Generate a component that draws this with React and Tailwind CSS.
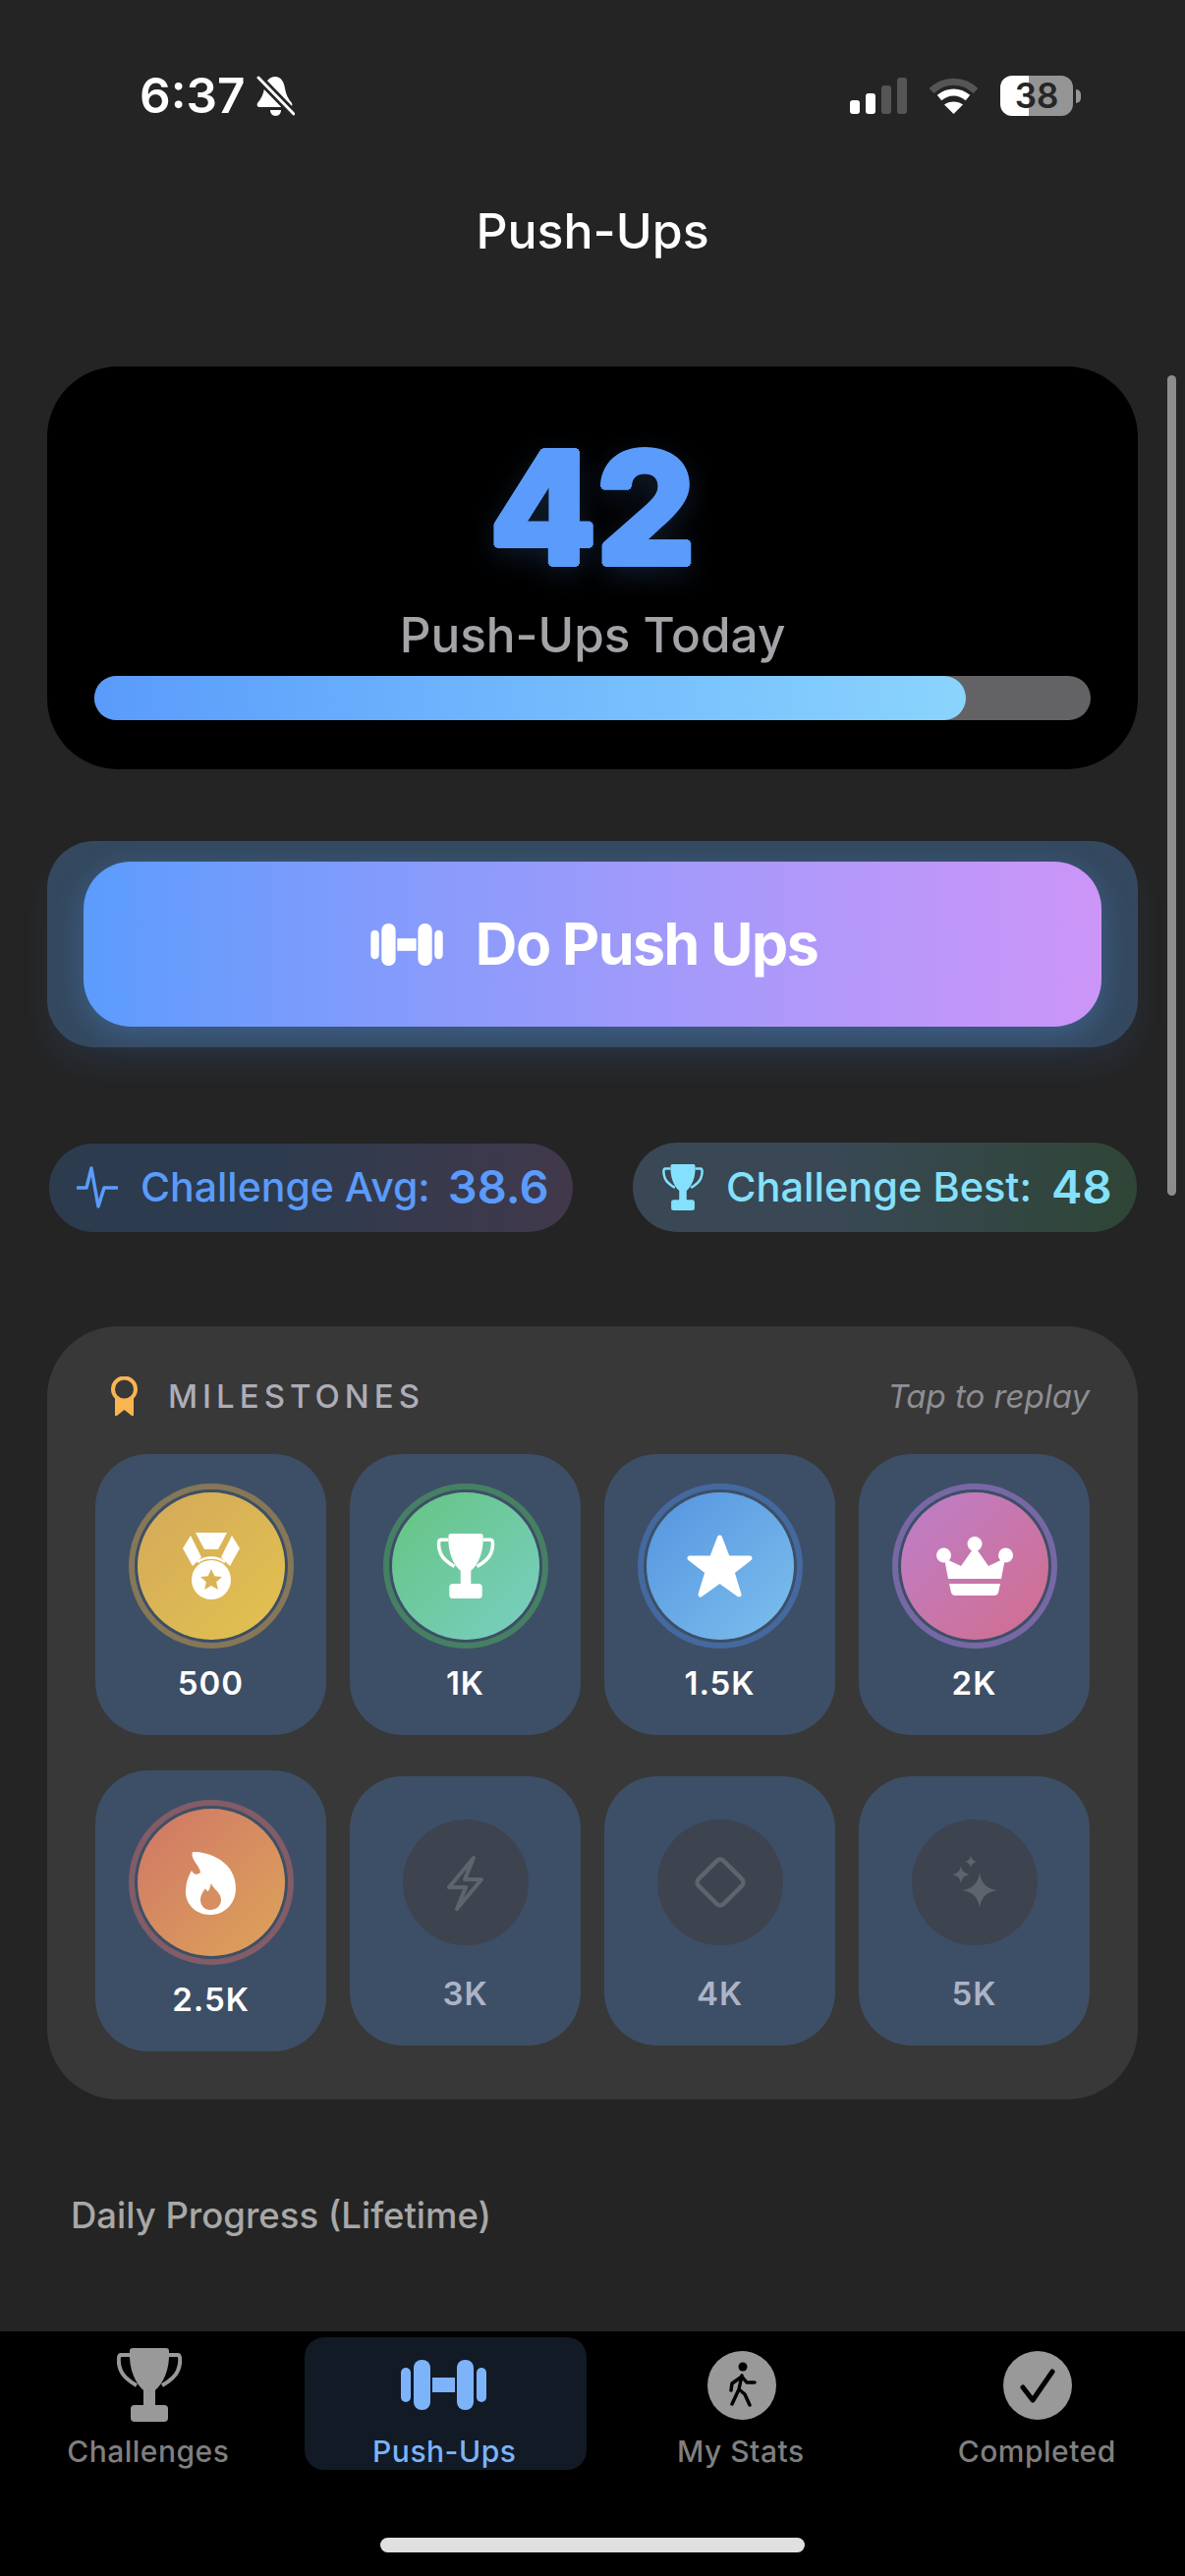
import React from "react";

const sans = "font-['Inter','Noto_Sans',sans-serif]";

const BellSlash = () => (
  <svg width="39" height="41" viewBox="0 0 39 41" fill="none">
    <path d="M19 1c-6 0-10 5-11 12-1 6-3 10-7 15-1 2 0 4 2 4h31c2 0 3-2 2-4-4-5-6-9-7-15-1-7-4-12-10-12Z" fill="#fff" />
    <path d="M14 35h11c0 3-2 6-5.500 6S14 38 14 35Z" fill="#fff" />
    <path d="M1 1 L40 41" stroke="#252525" strokeWidth="8.500" />
    <path d="M2 2 L38 39" stroke="#fff" strokeWidth="3" strokeLinecap="round" />
  </svg>
);

const Signal = () => (
  <svg width="58" height="37" viewBox="0 0 58 37">
    <rect x="0" y="23" width="10" height="14" rx="3" fill="#fff" />
    <rect x="16" y="16" width="10" height="21" rx="3" fill="#fff" />
    <rect x="32" y="8" width="10" height="29" rx="3" fill="#555" />
    <rect x="48" y="0" width="10" height="37" rx="3" fill="#555" />
  </svg>
);

const Wifi = () => (
  <svg width="51" height="37" viewBox="0 0 51 37" fill="none">
    <path d="M3 13.500C16 1 35 1 48 13.500" stroke="#555" strokeWidth="7" />
    <path d="M11 20.500C20 13 31 13 40 20.500" stroke="#fff" strokeWidth="7" />
    <path d="M25.500 37 L16 27.500C21 23.500 30 23.500 35 27.500Z" fill="#fff" />
  </svg>
);

const Dumbbell = ({ className }) => (
  <svg className={className} viewBox="0 0 87 51" fill="currentColor">
    <rect x="0" y="8" width="10" height="35" rx="5" />
    <rect x="13" y="0" width="17" height="51" rx="8" />
    <rect x="32" y="18" width="23" height="15" />
    <rect x="57" y="0" width="17" height="51" rx="8" />
    <rect x="77" y="8" width="10" height="35" rx="5" />
  </svg>
);

const Trophy = ({ className }) => (
  <svg className={className} viewBox="0 0 66 75" fill="currentColor">
    <path d="M13 3Q13 0 16 0H50Q53 0 53 3C54 22 47 36 39 43V60H27V43C19 36 12 22 13 3Z" />
    <rect x="14" y="58" width="38" height="17" rx="4" />
    <path d="M13 7H4C1 7 1 16 4 23C7 30 13 34 20 38" fill="none" stroke="currentColor" strokeWidth="4" />
    <path d="M53 7H62C65 7 65 16 62 23C59 30 53 34 46 38" fill="none" stroke="currentColor" strokeWidth="4" />
  </svg>
);

const Medal = () => (
  <svg width="58" height="68" viewBox="0 0 58 68" fill="#fff">
    <path d="M13 0H45L36 17H22Z" />
    <path d="M8 3L19 25 10 34 0 16Z" />
    <path d="M50 3L39 25 48 34 58 16Z" />
    <path d="M15 30C23 24 35 24 43 30" fill="none" stroke="#fff" strokeWidth="2.500" />
    <circle cx="29" cy="48" r="20" />
    <path d="M29 37l3.300 7.200 7.700.8-5.800 5.200 1.700 7.800-6.900-4-6.900 4 1.700-7.800-5.800-5.200 7.700-.8Z" fill="#dcb354" />
  </svg>
);

const Star = () => (
  <svg width="67" height="64" viewBox="0 0 67 64" fill="#fff" stroke="#fff" strokeWidth="5" strokeLinejoin="round">
    <path d="M33.500 3L41.500 24H64L46 38 53 61 33.500 47 14 61 21 38 3 24H25.500Z" />
  </svg>
);

const Crown = () => (
  <svg width="78" height="60" viewBox="0 0 78 60" fill="#fff">
    <circle cx="39" cy="7.500" r="7.500" />
    <circle cx="7.500" cy="19" r="7.500" />
    <circle cx="70.500" cy="19" r="7.500" />
    <path d="M8 22L25 30 39 10 53 30 70 22 66 43H12Z" />
    <path d="M13 48H65L63 57Q62 60 59 60H19Q16 60 15 57Z" />
  </svg>
);

const Flame = () => (
  <svg width="51" height="65" viewBox="0 0 51 65">
    <path d="M7 1C22 0 51 10 51 38 51 55 38 65 25 65 10 65 0 54 0 42 0 33 2 27 6 20 8 24 11 25 15 22 14 14 4 8 7 1Z" fill="#fff" />
    <path d="M26 33C28 39 36 42 36 50 36 56 31 60 25 60 19 60 15 55 15 50 15 45 18 41 20 38 21 41 23 42 24 39Z" fill="#d68f60" />
  </svg>
);

const Bolt = () => (
  <svg width="37" height="57" viewBox="0 0 37 57" fill="none" stroke="#5f636d" strokeWidth="4" strokeLinejoin="round" strokeLinecap="round">
    <path d="M27 3L2 33H19L10 55 35 25H18Z" />
  </svg>
);

const Diamond = () => (
  <svg width="58" height="58" viewBox="0 0 58 58" fill="none" stroke="#5f636d" strokeWidth="4.500">
    <rect x="11" y="11" width="36" height="36" rx="5" transform="rotate(45 29 29)" />
  </svg>
);

const Sparkles = () => (
  <svg width="46" height="55" viewBox="0 0 46 55" fill="#5f636d">
    <path d="M28 17Q30 33 46 35 30 37 28 53 26 37 10 35 26 33 28 17Z" />
    <path d="M9 10Q10 18 18 19 10 20 9 28 8 20 0 19 8 18 9 10Z" />
    <path d="M19 0Q20 5 25 6 20 7 19 12 18 7 13 6 18 5 19 0Z" />
  </svg>
);

const Pulse = () => (
  <svg width="42" height="43" viewBox="0 0 42 43" fill="none" stroke="#5a9bfb" strokeWidth="3.500" strokeLinejoin="round" strokeLinecap="round">
    <path d="M1 22H10L15 2 22 41 28 22H41" />
  </svg>
);

const Ribbon = () => (
  <svg width="29" height="41" viewBox="0 0 29 41">
    <path d="M5 22V39Q5 41 7 40L14.500 34 22 40Q24 41 24 39V22Z" fill="#f8b552" />
    <circle cx="14.500" cy="13" r="11.500" fill="#383838" stroke="#f8b552" strokeWidth="4" />
  </svg>
);

const WalkCircle = () => (
  <svg width="70" height="70" viewBox="0 0 70 70">
    <circle cx="35" cy="35" r="35" fill="#999" />
    <circle cx="36" cy="16" r="4.500" fill="#000" />
    <path d="M35 25L32 39 25 54M32 39L38 44 43 55M35 26L25 33 24 40M35 26L40 32H48" fill="none" stroke="#000" strokeWidth="3.500" strokeLinecap="round" strokeLinejoin="round" />
  </svg>
);

const CheckCircle = () => (
  <svg width="70" height="70" viewBox="0 0 70 70">
    <circle cx="35" cy="35" r="35" fill="#999" />
    <path d="M20 37L30 50 50 21" fill="none" stroke="#000" strokeWidth="5" strokeLinejoin="round" strokeLinecap="round" />
  </svg>
);

const unlocked = [
  { label: "500", icon: <Medal />, ring: "border-[#857757]", fill: "bg-linear-to-br from-[#d3a95a] to-[#e3c24e]" },
  { label: "1K", icon: <Trophy className="w-[60px] h-[66px] text-white" />, ring: "border-[#468064]", fill: "bg-linear-to-br from-[#66c47f] to-[#79cfc3]" },
  { label: "1.5K", icon: <Star />, ring: "border-[#44699f]", fill: "bg-linear-to-br from-[#5594e0] to-[#7cbfec]" },
  { label: "2K", icon: <Crown />, ring: "border-[#7768a5]", fill: "bg-linear-to-br from-[#bd7ecb] to-[#d26c8c]" },
  { label: "2.5K", icon: <Flame />, ring: "border-[#825c66]", fill: "bg-linear-to-br from-[#cf7666] to-[#dda457]" },
];

const locked = [
  { label: "3K", icon: <Bolt /> },
  { label: "4K", icon: <Diamond /> },
  { label: "5K", icon: <Sparkles /> },
];

const tabs = [
  { label: "Challenges", icon: <Trophy className="w-[66px] h-[75px] text-[#999]" /> },
  { label: "Push-Ups", icon: <Dumbbell className="w-[87px] h-[51px] text-[#7db3f9] -ml-[3px]" />, active: true },
  { label: "My Stats", icon: <WalkCircle /> },
  { label: "Completed", icon: <CheckCircle /> },
];

const App = () => {
  return (
    <div className={`relative w-[1206px] h-[2622px] flex flex-col bg-[#242424] overflow-hidden ${sans}`}>
      {/* scrollbar overlay */}
      <div className="absolute left-[1188px] top-[382px] w-[9px] h-[835px] rounded-full bg-[#8c8c8c]" />

      <div className="flex-1 px-[48px]">
        {/* status bar */}
        <div className="pt-[77px] pl-[94px] pr-[58px] flex items-center justify-between h-[118px]">
          <div className="flex items-center gap-[12px]">
            <span className="text-[49.500px] leading-[41px] font-semibold text-white">6:37</span>
            <BellSlash />
          </div>
          <div className="flex items-center">
            <Signal />
            <div className="ml-[22px] mr-[22px]">
              <Wifi />
            </div>
            <div className="w-[74px] h-[41px] rounded-[12px] flex items-center justify-center text-[35px] font-semibold text-[#262626] bg-[linear-gradient(90deg,#fff_39%,#959595_39%)]">
              38
            </div>
            <div className="w-[5px] h-[14px] ml-[3px] rounded-r-full bg-[#959595]" />
          </div>
        </div>

        <h1 className="mt-[87px] text-center text-[50px] leading-[60px] font-medium text-white">Push-Ups</h1>

        {/* today card */}
        <div className="mt-[108px] h-[410px] rounded-[72px] bg-black flex flex-col items-center pt-[79px] px-[48px]">
          <div className="text-[158px] leading-[130px] font-extrabold text-[#5a9bfb] [text-shadow:3px_0_#5a9bfb,-3px_0_#5a9bfb,0_3px_#5a9bfb,0_-3px_#5a9bfb,2px_2px_#5a9bfb,-2px_2px_#5a9bfb,2px_-2px_#5a9bfb,-2px_-2px_#5a9bfb,0_8px_30px_rgba(90,155,251,0.22)]">
            42
          </div>
          <div className="mt-[34px] text-[49.500px] leading-[60px] font-medium text-[#a3a3a8]">Push-Ups Today</div>
          <div className="mt-[12px] w-full h-[45px] rounded-full bg-[#636366]">
            <div className="w-[887px] h-full rounded-full bg-linear-to-r from-[#5a9bfb] to-[#8ad4fd]" />
          </div>
        </div>

        {/* do push ups */}
        <div className="mt-[73px] h-[210px] rounded-[48px] bg-[#34495f] px-[37px] py-[21px] shadow-[0_18px_30px_rgba(90,155,251,0.09)]">
          <button className="w-full h-full pl-[2px] rounded-[48px] flex items-center justify-center gap-[32px] text-white bg-linear-to-r from-[#5a9cfd] to-[#cc95f8] shadow-[0_8px_30px_rgba(90,155,251,0.28)]">
            <Dumbbell className="w-[76px] h-[43px]" />
            <span className="text-[59px] leading-[70px] font-bold tracking-[-1.500px]">Do Push Ups</span>
          </button>
        </div>

        {/* stats */}
        <div className="mt-[97px] pl-[2px] pr-[1px] flex items-center justify-between">
          <div className="w-[533px] h-[90px] rounded-full flex items-center pl-[28px] bg-linear-to-r from-[#2c3b4e] from-40% to-[#41384b] text-[#5a9bfb]">
            <Pulse />
            <span className="ml-[23px] text-[41px] font-medium">Challenge Avg:</span>
            <span className="ml-[18px] text-[47px] font-semibold">38.6</span>
          </div>
          <div className="w-[513px] h-[91px] rounded-full flex items-center pl-[29px] bg-linear-to-r from-[#394854] from-40% to-[#2f4536] text-[#84e1fd]">
            <Trophy className="w-[44px] h-[47px]" />
            <span className="ml-[22px] text-[41.500px] font-medium">Challenge Best:</span>
            <span className="ml-[20px] text-[47px] font-semibold">48</span>
          </div>
        </div>

        {/* milestones */}
        <div className="mt-[96px] rounded-[72px] bg-[#383838] px-[49px] pt-[51px] pb-[49px]">
          <div className="h-[41px] mb-[38px] pl-[15px] flex items-center">
            <Ribbon />
            <span className="ml-[30px] text-[33px] font-medium tracking-[5px] text-[#adadb8]">MILESTONES</span>
            <span className="ml-auto text-[33px] italic text-[#8e8e93]">Tap to replay</span>
          </div>
          <div className="grid grid-cols-4 gap-x-[24px] gap-y-[36px] items-center">
            {unlocked.map((m) => (
              <div key={m.label} className="h-[286px] rounded-[54px] bg-[#3d4f66] flex flex-col items-center pt-[30px]">
                <div className={`w-[168px] h-[168px] rounded-full border-[6px] flex items-center justify-center ${m.ring}`}>
                  <div className={`w-[150px] h-[150px] shrink-0 rounded-full flex items-center justify-center ${m.fill}`}>{m.icon}</div>
                </div>
                <div className="mt-[15px] text-[33px] leading-[40px] font-semibold tracking-[1px] text-white">{m.label}</div>
              </div>
            ))}
            {locked.map((m) => (
              <div key={m.label} className="h-[274px] rounded-[54px] bg-[#3d4f66] flex flex-col items-center pt-[44px]">
                <div className="w-[128px] h-[128px] rounded-full bg-[#3e4350] flex items-center justify-center">{m.icon}</div>
                <div className="mt-[29px] text-[33px] leading-[40px] font-semibold tracking-[1px] text-[#adb3c7]">{m.label}</div>
              </div>
            ))}
          </div>
        </div>

        <div className="mt-[93px] pl-[24px] text-[36.500px] leading-[50px] font-medium text-[#a8a8a8]">Daily Progress (Lifetime)</div>
      </div>

      {/* tab bar */}
      <div className="h-[249px] bg-black pt-[6px] flex flex-col items-center">
        <div className="w-full grid grid-cols-4">
          {tabs.map((t) => (
            <div key={t.label} className={`h-[135px] ml-[8px] mr-[6px] rounded-[20px] flex flex-col items-center ${t.active ? "bg-[#121a26]" : ""}`}>
              <div className="h-[102px] flex items-center justify-center">{t.icon}</div>
              <div className={`-ml-[2px] text-[30px] leading-[38px] font-medium tracking-[0.5px] ${t.active ? "text-[#7db3f9]" : "text-[#7f7f7f]"}`}>{t.label}</div>
            </div>
          ))}
        </div>
        <div className="mt-[69px] w-[432px] h-[15px] rounded-full bg-[#e0e0e0]" />
      </div>
    </div>
  );
};

export default App;
